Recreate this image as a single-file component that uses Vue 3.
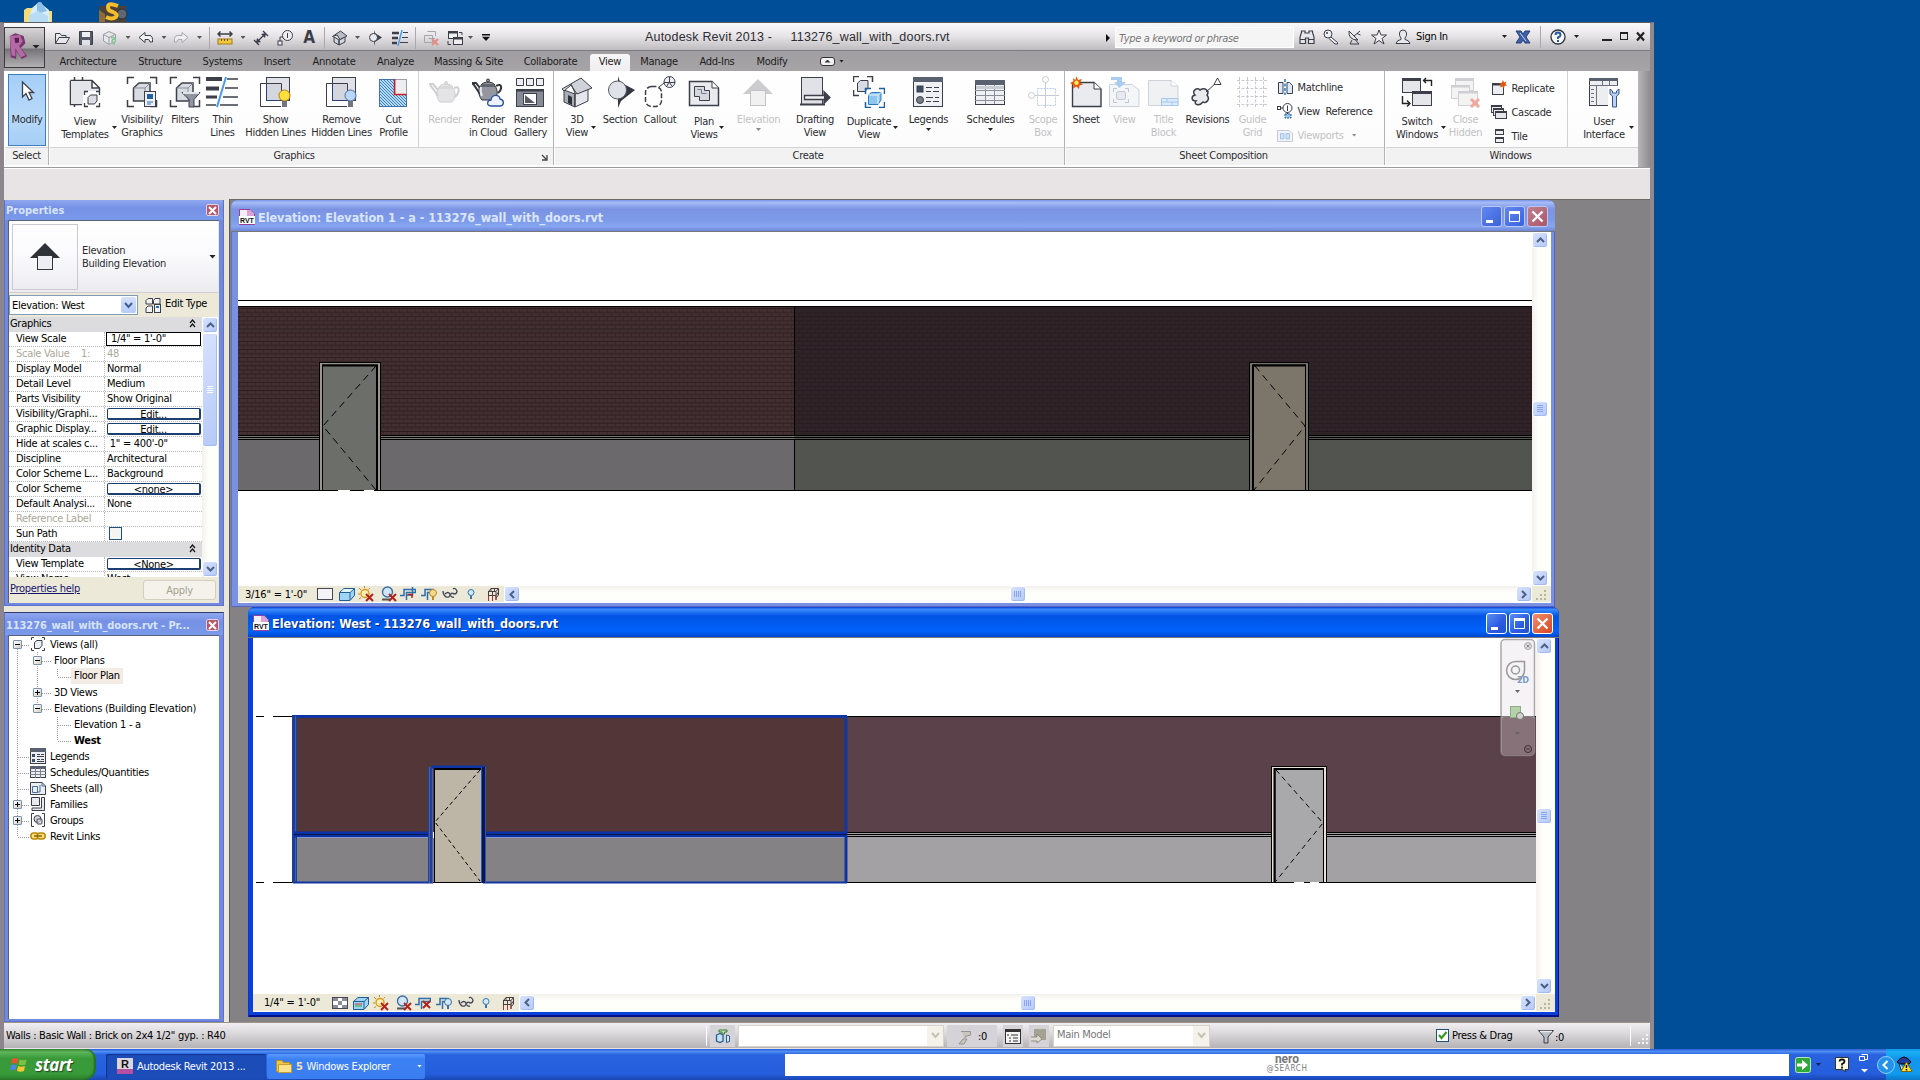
<script setup>
import { ref } from "vue";

// icon markup, 32x32 for the big ribbon buttons, 16x16 for everything else
const K = "#3c3f4a"
const G = "#d9dce2"
const corners = (c) => `<path d="M1.500 8V1.500H8M24 1.500H30.500V8M1.500 24V30.500H8M24 30.500H30.500V24" fill="none" stroke="${c}" stroke-width="1.500"/>`
const cube = `<path d="M7.500 12L13 7H24V19L19 25H7.500Z" fill="${G}" stroke="${K}" stroke-width="1.500"/><path d="M7.500 12H19V25M19 12L24 7" fill="none" stroke="#8b8f99"/>`

const big = {
  modify: `<path d="M11.500 7V22L15 18.500L18 25L21 23.500L18 17.500H22.500Z" fill="#fff" stroke="${K}" stroke-width="1.300"/>`,
  templates: `<path d="M1.500 4.500H23L30.500 12V15M1.500 4.500V28.500H13M5.500 1V5M13.500 1V5M5.500 28V31M23 4.500V12H30.500" fill="none" stroke="${K}" stroke-width="1.500"/><path d="M2 5H22V13H29V15H14V28H2Z" fill="#e3e5ea"/><path d="M15.500 19V15.500H19M27 15.500H30.500V19M15.500 27V30.500H19M27 30.500H30.500V27" fill="none" stroke="${K}" stroke-width="1.300"/><path d="M19 21.500L21.500 19H28V25L25.500 28H19Z" fill="${G}" stroke="${K}"/>`,
  visibility: corners(K) + cube + `<rect x="18.500" y="15.500" width="11" height="15" fill="#eef2f7" stroke="${K}"/><rect x="21" y="18" width="6" height="5" fill="#1d5fa8"/><path d="M21 26H27M21 28H25" stroke="#2b6cb8"/>`,
  filters: corners(K) + cube + `<path d="M13 16.500H31L25 23.500V31H20V23.500Z" fill="#8f95a0" stroke="${K}"/><path d="M14 17H30" stroke="#dfe3ea" stroke-width="2"/>`,
  thin: `<path d="M0 3H16" stroke="${K}" stroke-width="4"/><path d="M0 12.500H13" stroke="${K}" stroke-width="4"/><path d="M0 21H11" stroke="${K}" stroke-width="3"/><path d="M0 29H10M21 3H32M19 12H32M17 21H32M14 29H32" stroke="${K}" stroke-width="1.500"/><path d="M20 1L11 31" stroke="#4a9be8" stroke-width="2"/>`,
  showHidden: `<rect x="7.500" y="1.500" width="23" height="23" fill="#e0e2e7" stroke="${K}"/><path d="M7 7.500H1.500V30.500H22M1.500 7.500H22.500V15" fill="none" stroke="${K}"/><rect x="8" y="8" width="14" height="16" fill="#d3d6dd"/><path d="M7.500 8V24.500H20" fill="none" stroke="#1c3f9c" stroke-dasharray="2 1.500"/><circle cx="25.500" cy="19.500" r="5.500" fill="#ffdf3c" stroke="#b07a1a"/><rect x="23" y="25" width="5" height="6" fill="#70757f"/>`,
  removeHidden: `<rect x="7.500" y="1.500" width="23" height="23" fill="#e0e2e7" stroke="${K}"/><path d="M7 7.500H1.500V30.500H22M1.500 7.500H22.500V15" fill="none" stroke="${K}"/><rect x="8" y="8" width="14" height="16" fill="#d3d6dd"/><path d="M7.500 8V24.500H20" fill="none" stroke="#1c3f9c" stroke-dasharray="2 1.500"/><circle cx="25.500" cy="19.500" r="5.500" fill="#b9d7fb" stroke="#51699b"/><rect x="23" y="25" width="5" height="6" fill="#70757f"/>`,
  cut: `<defs><pattern id="ht" width="3" height="3" patternUnits="userSpaceOnUse"><rect width="3" height="3" fill="#b8dbf8"/><path d="M0 0L3 3" stroke="#3b7fc4"/></pattern></defs><rect x="2.500" y="3.500" width="27" height="27" fill="url(#ht)" stroke="#3f74b0"/><rect x="18" y="3.500" width="11.500" height="15" fill="#eceef2" stroke="#9a9ea8"/><path d="M17.500 3V18.500H29.500" fill="none" stroke="#c22" stroke-width="1.500"/>`,
  render: `<g fill="#e4e4e6" stroke="#cfcfd2"><path d="M9 12C6 18 9 24 11 26H23C27 22 27 16 24 12Z"/><path d="M9 20L2 10L1 8H4L9 14M25 12C31 9 31 16 26 21" fill="none" stroke-width="2"/><path d="M10 11C13 7 21 7 24 11Z"/><circle cx="17" cy="7" r="1.500"/></g>`,
  cloud: `<g fill="#94979f" stroke="#33353c"><path d="M8 10C5 16 8 22 10 24H22C26 20 26 14 23 10Z"/><path d="M8 18L2 9L0 7H4L8 12M24 10C31 6 30 14 26 17" fill="none" stroke-width="2"/><path d="M9 9C12 5 20 5 23 9Z"/><circle cx="16" cy="4.500" r="1.500"/></g><path d="M9 11C8 15 9 18 10 20" stroke="#e8e9ec" stroke-width="2" fill="none"/><path d="M19 30C14 30 15 24 19 24C20 18 27 18 28 23C33 24 32 30 28 30Z" fill="#eef3fd" stroke="#2a52a8" stroke-width="1.300"/>`,
  gallery: `<path d="M2.500 2.500H9.500V9.500H2.500ZM12.500 2.500H19.500V9.500H12.500ZM22.500 2.500H29.500V9.500H22.500Z" fill="#eceef1" stroke="${K}"/><rect x="2.500" y="13.500" width="27" height="17" fill="#878c96" stroke="${K}"/><path d="M2 14.500H30" stroke="${K}" stroke-width="2"/><rect x="9.500" y="17.500" width="13" height="11" fill="#fff" stroke="${K}"/><path d="M11 19V27H21Z" fill="#555a66"/>`,
  house: `<path d="M3 14L14 18V31L3 26Z" fill="#a9adb6" stroke="${K}"/><path d="M14 18L27 13V25L14 31Z" fill="#e4e6eb" stroke="${K}"/><path d="M1 13L20 2L31 12L16 18L10 9L3 15Z" fill="#cfd2d9" stroke="${K}"/><path d="M10 8L14 17L14 30" fill="none" stroke="${K}"/><path d="M7 19L11 21V29L7 27Z" fill="#30323a"/>`,
  section: `<path d="M14 0V32L17 25L31 14L16 6Z" fill="#33363f"/><circle cx="13.500" cy="14" r="9" fill="#dfe2e8" stroke="#555963"/>`,
  callout: `<rect x="1.500" y="10.500" width="16" height="20" rx="6" fill="none" stroke="${K}" stroke-dasharray="5 2" stroke-width="1.500"/><circle cx="25.500" cy="6" r="5.500" fill="#eceef2" stroke="${K}"/><path d="M15 11L20 7M20 6.500H31M25.500 1V6M23 10L25 6L28 10" fill="none" stroke="${K}"/>`,
  plan: `<path d="M1.500 5.500H24L30.500 12V29.500H1.500Z" fill="#e8eaee" stroke="${K}" stroke-width="1.500"/><path d="M24 5.500V12H30.500" fill="#fff" stroke="${K}"/><path d="M6.500 10.500H16.500V14.500H21.500V24.500H11.500V20.500H6.500Z" fill="#d5d8df" stroke="${K}"/><path d="M9.500 13.500H13.500V17.500H18.500" fill="none" stroke="#7a7e88"/>`,
  elevation: `<path d="M16 3L31 18H1Z" fill="#cdcdcf"/><rect x="8.500" y="14.500" width="15" height="15" fill="#f1f1f2" stroke="#c4c4c6"/>`,
  drafting: `<rect x="2.500" y="1.500" width="21" height="27" fill="#e0e2e7" stroke="${K}"/><path d="M1 28.500H26" stroke="${K}" stroke-width="2"/><path d="M5.500 19.500H25V15.500L31 21.500L25 27.500V23.500H5.500Z" fill="#f4f5f7" stroke="${K}" stroke-width="1.300"/><path d="M25 16L31 21.500L25 27Z" fill="${K}"/>`,
  duplicate: `<path d="M.5 6V.5H6M14 .5H19.500V6M.5 14V19.500H6" fill="none" stroke="${K}" stroke-width="1.500"/><path d="M4.500 7L7.500 4.500H15V12L12 15.500H4.500Z" fill="${G}" stroke="${K}"/><path d="M12.500 18V12.500H18M26 12.500H31.500V18M12.500 26V31.500H18M26 31.500H31.500V26" fill="none" stroke="#1e5fa0" stroke-width="1.500"/><path d="M15.500 19L18.500 16.500H28V24L25 28.500H15.500Z" fill="#8fc5ef" stroke="#2c7cc4"/><path d="M15.500 19H25V28M25 19L28 16.500" fill="none" stroke="#eaf5fd"/>`,
  legends: `<rect x="1.500" y="1.500" width="29" height="29" fill="#f0f1f4" stroke="${K}"/><rect x="1" y="1" width="30" height="5" fill="#596170"/><rect x="5" y="10" width="6" height="6" fill="#3f4c66" stroke="${K}"/><circle cx="8" cy="24" r="3.500" fill="#777c87" stroke="${K}"/><path d="M14 11.500H20M22 11.500H27M14 15.500H19M21 15.500H27M14 21.500H21M23 21.500H27M14 25.500H19M21 25.500H27" stroke="${K}"/>`,
  schedules: `<rect x="1.500" y="4.500" width="29" height="24" fill="#eef0f3" stroke="${K}"/><rect x="1" y="4" width="30" height="5" fill="#596170"/><path d="M1 14.500H31M1 19.500H31M1 24.500H31M11.500 9V28M20.500 9V28" stroke="#8a8e98"/><path d="M2 11.500H30" stroke="#c9ccd3" stroke-width="3"/>`,
  scope: `<rect x="10.500" y="12.500" width="18" height="17" fill="none" stroke="#b9cdea" stroke-dasharray="2 1"/><path d="M18.500 6V32M8 19.500H32" stroke="#c5cbd6"/><circle cx="18.500" cy="3.500" r="3" fill="#fff" stroke="#c6c9cf"/><circle cx="4.500" cy="19.500" r="3" fill="#fff" stroke="#c6c9cf"/>`,
  sheet: `<path d="M2.500 6.500H24L31 13V30.500H2.500Z" fill="#e9ebef" stroke="${K}" stroke-width="1.400"/><path d="M24 6.500V13H31" fill="#fff" stroke="${K}"/><path d="M6.500 0L8 4L12 3L10 6.500L13 8.500L9.500 9.500L9 13L6.500 10.500L3 12.500L3.500 9L0 7L3.500 5.500L3 2L5.500 4Z" fill="#e2570f"/><circle cx="6.500" cy="6.800" r="2.200" fill="#ffe95c"/>`,
  viewIn: `<path d="M1.500 8.500H24L31 14V30.500H1.500Z" fill="#f4f5f7" stroke="#ccd2dc"/><path d="M5.500 16V12.500H9M17 12.500H20.500V16M5.500 23V26.500H9M17 26.500H20.500V23" fill="none" stroke="#bcc6d6"/><rect x="8.500" y="15.500" width="9" height="8" rx="2" fill="#e7eaef" stroke="#c0c7d2"/><path d="M3 1H14V6H18L11.500 12L6 6H9V4H3Z" fill="#a9cdf2"/>`,
  titleBlock: `<path d="M1.500 4.500H24L31 10V29.500H1.500Z" fill="#f0f1f3" stroke="#cfd2d8"/><path d="M24 4.500V10H31" fill="#fff" stroke="#cfd2d8"/><path d="M14.500 22.500H31V29.500H14.500ZM14.500 26H31M20 22.500V26M25 26V29" fill="#dcebfa" stroke="#a7c8ec"/>`,
  revisions: `<path d="M4 19C0 15 6 11 9 14C14 11 19 15 16 19C20 24 14 28 12 26C8 31 2 28 5 25C0 25 0 20 4 19Z" fill="#e9ebee" stroke="${K}" stroke-width="1.500"/><path d="M15 16L24 8M23 8.500L26.500 2L30 8.500Z" fill="#fff" stroke="${K}"/>`,
  guide: `<path d="M3.500 1V31M11.500 1V31M19.500 1V31M27.500 1V31M1 4.500H31M1 12.500H31M1 20.500H31M1 28.500H31" stroke="#c9cbd0" stroke-dasharray="3 1.500"/>`,
  switchWin: `<rect x="1.500" y="2.500" width="18" height="14" fill="#e4e6ea" stroke="${K}"/><rect x="1" y="2" width="19" height="3" fill="${K}"/><rect x="11.500" y="15.500" width="19" height="14" fill="#e4e6ea" stroke="${K}"/><rect x="11" y="15" width="20" height="3" fill="${K}"/><path d="M23 4.500H30.500V10M25 2L22.500 4.500L25 7M1.500 20V27.500H8M6 24.500L9 27.500L6 30.500" fill="none" stroke="#222" stroke-width="1.400"/>`,
  closeHidden: `<rect x="6.500" y="2.500" width="18" height="12" fill="#f3f3f4" stroke="#d0d1d4"/><rect x="6" y="2" width="19" height="3" fill="#cfd0d3"/><rect x="2.500" y="9.500" width="18" height="13" fill="#f3f3f4" stroke="#d0d1d4"/><rect x="9.500" y="15.500" width="19" height="14" fill="#f3f3f4" stroke="#d0d1d4"/><path d="M2 10.500H21M9 16.500H29" stroke="#cfd0d3" stroke-width="2"/><path d="M22 23L30 31M30 23L22 31" stroke="#f0a79c" stroke-width="3"/>`,
  userUi: `<rect x="1.500" y="2.500" width="28" height="27" fill="#eceef1" stroke="${K}"/><rect x="1" y="2" width="29" height="3" fill="#596170"/><path d="M1 9.500H30M8.500 9V30M14.500 5V9M21.500 5V9M3 13.500H6M3 17.500H6M3 21.500H6M3 25.500H6" stroke="#6e727c"/><rect x="20" y="10" width="12" height="22" fill="#fff"/><path d="M22 13V18L24.500 20V31H28.500V20L31 18V13L28.500 15V17H24.500V15Z" fill="#bcd3f3" stroke="#34558f"/>`,
}

const small = {
  open: `<path d="M1.500 13.500V3.500H6L7.500 5.500H12V7.500M1.500 13.500L5 7.500H15.500L12 13.500Z" fill="#e6e7ea" stroke="${K}"/>`,
  save: `<path d="M1.500 1.500H14.500V14.500H1.500Z" fill="#565a66" stroke="${K}"/><rect x="4" y="2" width="8" height="5" fill="#eceef1"/><rect x="4" y="10" width="8" height="5" fill="#dfe1e6"/>`,
  sync: `<path d="M1.500 4.500L7 1.500L13.500 4.500V11L7 14.500L1.500 11ZM1.500 4.500L7 7.500L13 4.500M7 7.500V14" fill="#e6e7e9" stroke="#9a9da5"/><path d="M9 8C13 6 15 10 12 13M13 9C9 9 9 14 13 14" fill="none" stroke="#8cc39b" stroke-width="1.500"/>`,
  undo: `<path d="M1 7.500L7 2.500V5.500H12Q15 6 14.500 12H12Q12 9.500 10 9.500H7V12.500Z" fill="#f2f3f5" stroke="${K}"/>`,
  redo: `<path d="M15 7.500L9 2.500V5.500H4Q1 6 1.500 12H4Q4 9.500 6 9.500H9V12.500Z" fill="#eee" stroke="#a5a7ad"/>`,
  measure: `<path d="M1 4H15M3.500 1.500L1 4L3.500 6.500M12.500 1.500L15 4L12.500 6.500" fill="none" stroke="${K}" stroke-width="1.500"/><rect x="1" y="9" width="14" height="5" fill="#f3c93c" stroke="#a07a17"/><path d="M4.500 9V11M7.500 9V11M10.500 9V11" stroke="#6d5310"/>`,
  dim: `<path d="M3 13L13 3M1 10L6 15M10 1L15 6" stroke="${K}" stroke-width="1.300"/><path d="M3 13L4 8L8 12ZM13 3L12 8L8 4Z" fill="${K}"/>`,
  tag: `<circle cx="10.500" cy="5.500" r="5" fill="#eee" stroke="${K}"/><path d="M10.500 3V8M6 7H3V11" fill="none" stroke="${K}"/><rect x="1" y="11" width="4" height="4" fill="#eee" stroke="${K}"/>`,
  home: `<path d="M2 7L7 10V15L2 12ZM7 10L13 7V12L7 15Z" fill="#d4d7dd" stroke="${K}"/><path d="M.5 6.500L8.500 1L15 6L8 9.500L5 5Z" fill="#b8bcc6" stroke="${K}"/>`,
  sect: `<path d="M7 0V16L8 12L15 7.500L8 3Z" fill="${K}"/><circle cx="6.500" cy="7.500" r="4" fill="#e8e9ec" stroke="${K}"/>`,
  thinS: `<path d="M0 3H7M0 8H6M0 13H5" stroke="${K}" stroke-width="2.600"/><path d="M11 2.500H16M10 7.500H16M8 12.500H16" stroke="${K}"/><path d="M10 0L6 16" stroke="#4a9be8" stroke-width="1.500"/>`,
  closeH: `<path d="M4.500 1.500H12.500V6M1.500 5.500H9.500V12.500H1.500ZM5.500 8.500H12" fill="none" stroke="#a3a5aa"/><path d="M9 9L15 15M15 9L9 15" stroke="#e08a84" stroke-width="2"/>`,
  switchS: `<rect x="1.500" y="1.500" width="9" height="7" fill="#eee" stroke="${K}"/><rect x="6.500" y="7.500" width="9" height="7" fill="#eee" stroke="${K}"/><path d="M1 2.500H11M6 8.500H16" stroke="${K}" stroke-width="2"/><path d="M12 2.500H15V5M1 11V14.500H4" fill="none" stroke="${K}"/>`,
  binoc: `<path d="M2.500 3.500V2H6V4H10V2H13.500V3.500L15 8V14.500H9.500V9H6.500V14.500H1V8Z" fill="#e6e7ea" stroke="${K}" stroke-width="1.200"/><path d="M1 10.500H6.500M9.500 10.500H15" stroke="${K}"/>`,
  key: `<path d="M8 8L14.500 13.500V15H12L6 9.500" fill="#f0f0f2" stroke="${K}"/><circle cx="5" cy="5" r="4" fill="#f0f0f2" stroke="${K}"/><circle cx="4" cy="4" r="1" fill="${K}"/>`,
  dish: `<path d="M2 2Q1 11 11 11Z" fill="#e6e7ea" stroke="${K}"/><path d="M7 7L13 2M10 4.500L13.500 6M5 11L3 15H12L8.500 11" fill="none" stroke="${K}"/>`,
  star: `<path d="M8 1L10 6H15.500L11 9.500L13 15L8 11.500L3 15L5 9.500L.5 6H6Z" fill="#f0f0f2" stroke="${K}"/>`,
  user: `<path d="M1 14.500H15Q14 11 10 10.500V9Q12 7 11.500 4Q11 1 8 1Q5 1 4.500 4Q4 7 6 9V10.500Q2 11 1 14.500Z" fill="#e9eaed" stroke="${K}"/>`,
  exch: `<path d="M1 2H6L8 5L10 2H15L11 8L15 14H10L8 11L6 14H1L5 8Z" fill="#3d5fa8" stroke="#27407c"/><path d="M5 4L11 12" stroke="#c7d5f2"/>`,
  help: `<circle cx="8" cy="8" r="7" fill="#f6f7f9" stroke="#30343f" stroke-width="1.300"/><path d="M5.500 6Q5.500 3.500 8 3.500T10.500 6Q10.500 7.500 8 8.500V10" fill="none" stroke="#2557a8" stroke-width="1.900"/><rect x="7" y="11" width="2" height="2" fill="#2557a8"/>`,
  matchline: `<path d="M1.500 3.500H6V14.500H1.500ZM10 3.500H12.500L15.500 6.500V14.500H10Z" fill="#dcebfa" stroke="${K}"/><path d="M8 0V16" stroke="#2a7ac8" stroke-dasharray="3 1.500" stroke-width="1.500"/>`,
  viewRef: `<circle cx="10.500" cy="5" r="4.500" fill="#fff" stroke="${K}"/><path d="M10.500 2.500V8M4 5H6M10.500 9V11" stroke="${K}"/><rect x=".5" y="3.500" width="3" height="3" fill="#fff" stroke="${K}"/><rect x="8" y="11" width="6" height="4" fill="#9cc6ee" stroke="#1e5fa0" stroke-dasharray="2 1"/>`,
  viewports: `<path d="M.5 3.500H12L15.500 6.500V14.500H.5Z" fill="#f2f4f7" stroke="#c5cbd5"/><path d="M3.500 6.500H7V12H3.500ZM9 6.500H12.500V12H9Z" fill="#cfe2f6" stroke="#a5c6ea"/>`,
  replicate: `<rect x="1.500" y="3.500" width="11" height="11" fill="#eceef1" stroke="${K}"/><path d="M1 4.500H11" stroke="${K}" stroke-width="2"/><path d="M12 0L13 2.500L15.500 1.500L14.500 4L16 5.500L13.500 6L13 8.500L11.500 6.500L9 7.500L10 5L8 3.500L10.500 3Z" fill="#e2570f"/>`,
  cascade: `<rect x=".5" y="1.500" width="10" height="7" fill="#eee" stroke="${K}"/><rect x="2.500" y="4.500" width="10" height="7" fill="#eee" stroke="${K}"/><rect x="4.500" y="7.500" width="11" height="7" fill="#e4e6ea" stroke="${K}"/><path d="M0 2.500H11M2 5.500H13M4 8.500H16" stroke="${K}"/>`,
  tile: `<rect x="4.500" y="1.500" width="8" height="5" fill="#eee" stroke="${K}"/><rect x="4.500" y="9.500" width="8" height="5" fill="#eee" stroke="${K}"/><path d="M4 2.500H13M4 10.500H13" stroke="${K}"/>`,
  rect: `<rect x=".5" y="2.500" width="15" height="11" fill="#f4f4f8" stroke="#444856"/>`,
  detail: `<rect x=".5" y="2.500" width="15" height="11" fill="#fff" stroke="#444856"/><path d="M1 3H6V6H1ZM10 3H15V6H10ZM6 6H10V10H6ZM1 10H6V13H1ZM10 10H15V13H10Z" fill="#8a8e99"/>`,
  box: `<path d="M.5 6.500L5 2.500H15.500V9.500L11 14.500H.5Z" fill="#9fd4f6" stroke="#1f5f95"/><path d="M.5 6.500H11V14M11 6.500L15.500 2.500" fill="none" stroke="#1f5f95"/><path d="M2 6L5 3H14L11 6Z" fill="#e4f4fd"/>`,
  boxR: `<path d="M.5 6.500L5 2.500H15.500V9.500L11 14.500H.5Z" fill="#9fd4f6" stroke="#1f5f95"/><path d="M.5 6.500H11V14M11 6.500L15.500 2.500" fill="none" stroke="#1f5f95"/><path d="M2 9H9" stroke="#c33" /><path d="M2 11H9" stroke="#3a3"/>`,
  sun: `<path d="M6.500 0V2M1 2L3 4M0 8H2M1 13L3 11.500M12 2L10.500 3.500" stroke="#c98a12"/><circle cx="7" cy="7.500" r="4" fill="#fdf0b4" stroke="#d79a1a" stroke-width="1.400"/><path d="M8 8L15 15M15 8L8 15" stroke="#b5211c" stroke-width="2"/>`,
  shadow: `<circle cx="6.500" cy="6" r="5" fill="#cfe6f8" stroke="#3d6fa5" stroke-width="1.400"/><path d="M1 13.500H9" stroke="#555" stroke-width="2"/><path d="M8 8L15 15M15 8L8 15" stroke="#b5211c" stroke-width="2"/>`,
  crop: `<path d="M0 9.500H4V3.500H15.500V6.500H6.500V14M12.500 1V9H6" fill="none" stroke="#2c6fae" stroke-width="1.500"/><path d="M8 8.500H12V12" fill="none" stroke="#b5211c" stroke-width="1.500"/>`,
  cropX: `<path d="M0 9.500H4V3.500H15.500V6.500H6.500V14" fill="none" stroke="#2c6fae" stroke-width="1.500"/><path d="M8 6L15 13M15 6L8 13" stroke="#b5211c" stroke-width="2"/>`,
  cropBulb: `<path d="M0 9.500H4V3.500H13M6.500 14V6.500H10" fill="none" stroke="#2c6fae" stroke-width="1.500"/><circle cx="12" cy="7" r="3.500" fill="#f9d98c" stroke="#b98a2a"/><path d="M12 10V14" stroke="#b98a2a" stroke-width="2"/>`,
  cropB2: `<path d="M0 9.500H4V3.500H13M6.500 14V6.500H10" fill="none" stroke="#2c6fae" stroke-width="1.500"/><circle cx="12" cy="7" r="3.500" fill="#d5e8f9" stroke="#3d6fa5"/><path d="M12 10V14" stroke="#3d6fa5" stroke-width="2"/>`,
  glasses: `<path d="M1 5Q1 9 4 11Q8 12 8 8Q6 5 3 8M8 9Q10 6 12 8Q15 8 15 5Q13 1 11 3M8 9Q10 12 12 11" fill="none" stroke="#444856" stroke-width="1.300"/>`,
  bulb: `<circle cx="8" cy="6.500" r="3" fill="#d5e8f9" stroke="#3476b4"/><path d="M8 10V13" stroke="#3476b4" stroke-width="2"/>`,
  frame: `<path d="M3.500 5.500L6 2.500H13.500V9L11 12M3.500 5.500V14.500M7.500 5.500V14M11 5.500V14M3 5.500H11L13.500 2.500M3 9.500H11L13.500 6M6 2.500V5.500M9.500 2.500V5.500" fill="none" stroke="#4a3d42"/><path d="M3.500 10V15M7.500 10V15M11 10V14" stroke="#a33"/>`,
  views: `<path d="M4 1.500H1.500V4M12 1.500H14.500V4M4 14.500H1.500V12M12 14.500H14.500V12" fill="none" stroke="${K}"/><path d="M4.500 6.500L7 4.500H12V9.500L9.500 12.500H4.500Z" fill="#eceef2" stroke="${K}"/>`,
  leg: `<rect x=".5" y=".5" width="15" height="15" fill="#eceef1" stroke="${K}"/><rect x="0" y="0" width="16" height="4" fill="#596170"/><path d="M2 6H5V9H2ZM2 11H5V14H2Z" fill="#3f4c66"/><path d="M7 6.500H10M11 6.500H14M7 8.500H14M7 11.500H10M11 11.500H14M7 13.500H14" stroke="${K}"/>`,
  sch: `<rect x=".5" y="2.500" width="15" height="11" fill="#eef0f3" stroke="${K}"/><path d="M0 3.500H16" stroke="#596170" stroke-width="3"/><path d="M0 7.500H16M0 10.500H16M5.500 4V14M10.500 4V14" stroke="#7e828c"/>`,
  sht: `<path d="M.5 2.500H12L15.500 6V14.500H.5Z" fill="#eceef1" stroke="${K}"/><path d="M2.500 6.500H7.500V12.500H2.500ZM10 5V12H7M12 2V6H15" fill="none" stroke="#4a6e9c"/>`,
  fam: `<path d="M1.500 1.500H9.500V9.500H1.500ZM11.500 1.500H14.500V14.500H2V12H11.500Z" fill="#e7e9ed" stroke="${K}"/>`,
  grp: `<path d="M4 1.500H1.500V14.500H4M12 1.500H14.500V14.500H12" fill="none" stroke="${K}"/><circle cx="7.500" cy="7" r="3.500" fill="#d3d8e0" stroke="${K}"/><rect x="7" y="7" width="5" height="5" rx="1" fill="#e3e6eb" fill-opacity=".6" stroke="${K}"/>`,
  link: `<rect x=".8" y="5" width="8" height="6" rx="3" fill="#ffe27a" stroke="#b9860e" stroke-width="1.500"/><rect x="7.200" y="5" width="8" height="6" rx="3" fill="#ffe27a" stroke="#b9860e" stroke-width="1.500"/><path d="M4 8H12" stroke="#7d5a08" stroke-width="1.400"/>`,
  editType: `<path d="M3 1.500H7.500V7H1V3.500ZM10 1.500H15V7H8.500V3.500ZM3 9H7.500V15.500H1V11Z" fill="#f2f2f2" stroke="${K}"/><rect x="9.500" y="7.500" width="6" height="8" fill="#eef2f7" stroke="${K}"/><rect x="11" y="9" width="3" height="2" fill="#2b6cb8"/>`,
  workset: `<path d="M1.500 7L5 5.500L8 7V13L5 14.500L1.500 13Z" fill="#c4e2f7" stroke="#2a5f93" stroke-width="1.300"/><path d="M4 4V2H12V4H9.500V6H7V4Z" fill="#bfe3ae" stroke="#3d7a3a"/><path d="M11.500 7L14.500 8V13.500L11.500 14.500Z" fill="#dce6ee" stroke="#2a5f93"/>`,
  paint: `<path d="M4 2.500H13.500V6L8 7.500V9M6 10H10L7 15H2Z" fill="#c9c5bd" stroke="#96938c"/>`,
  list: `<rect x=".5" y="1.500" width="15" height="14" fill="#f4f4f4" stroke="#333"/><path d="M0 3H16" stroke="#333" stroke-width="2"/><path d="M2 7H4M6 7H13M4 10H6M8 10H13M4 13H6M8 13H13" stroke="#333"/>`,
  main: `<rect x="3" y="1" width="12" height="11" fill="#a5a294"/><path d="M0 9H6V6L11 11L6 15V13H0" fill="#dedbd2" stroke="#8e8b80"/>`,
  funnel: `<path d="M.5 2.500H15.500L10 9V15H6V9Z" fill="#b9bdc6" stroke="${K}"/><path d="M2 3.500H14" stroke="#eee" stroke-width="1.500"/>`,
}

// turns label centres into gaps so that each panel stays a plain flex row
const lay = (start, items) => {
  let edge = start
  return items.map((it) => {
    const left = it.c - it.w / 2
    const gap = left - edge
    edge = left + it.w
    return { ...it, gap }
  })
}

const graphics = lay(49, [
  { c: 85, w: 42, icon: "templates", l: ["View", "Templates"], side: 30 },
  { c: 142, w: 42, icon: "visibility", l: ["Visibility/", "Graphics"] },
  { c: 185, w: 32, icon: "filters", l: ["Filters"] },
  { c: 222.500, w: 32, icon: "thin", l: ["Thin", "Lines"] },
  { c: 275.5, w: 60, icon: "showHidden", l: ["Show", "Hidden Lines"] },
  { c: 341.500, w: 60, icon: "removeHidden", l: ["Remove", "Hidden Lines"] },
  { c: 393.5, w: 32, icon: "cut", l: ["Cut", "Profile"] },
  { c: 418.5, w: 1, line: true },
  { c: 445, w: 34, icon: "render", l: ["Render"], off: true },
  { c: 488, w: 38, icon: "cloud", l: ["Render", "in Cloud"] },
  { c: 530.5, w: 34, icon: "gallery", l: ["Render", "Gallery"] },
])
const create = lay(554, [
  { c: 577, w: 32, icon: "house", l: ["3D", "View"], side: 17, up: true },
  { c: 620, w: 34, icon: "section", l: ["Section"] },
  { c: 660, w: 34, icon: "callout", l: ["Callout"] },
  { c: 704, w: 32, icon: "plan", l: ["Plan", "Views"], side: 18 },
  { c: 758.5, w: 42, icon: "elevation", l: ["Elevation"], off: true, below: true },
  { c: 815, w: 40, icon: "drafting", l: ["Drafting", "View"] },
  { c: 869, w: 46, icon: "duplicate", l: ["Duplicate", "View"], side: 27 },
  { c: 928.5, w: 40, icon: "legends", l: ["Legends"], below: true },
  { c: 990.5, w: 50, icon: "schedules", l: ["Schedules"], below: true },
  { c: 1043, w: 32, icon: "scope", l: ["Scope", "Box"], off: true },
])
const sheets = lay(1065, [
  { c: 1086, w: 30, icon: "sheet", l: ["Sheet"] },
  { c: 1124.5, w: 30, icon: "viewIn", l: ["View"], off: true },
  { c: 1163.5, w: 30, icon: "titleBlock", l: ["Title", "Block"], off: true },
  { c: 1207.5, w: 46, icon: "revisions", l: ["Revisions"] },
  { c: 1252.5, w: 30, icon: "guide", l: ["Guide", "Grid"], off: true },
])
const sheetSmall = [
  { icon: "matchline", l: "Matchline" },
  { icon: "viewRef", l: "View  Reference" },
  { icon: "viewports", l: "Viewports", off: true, arrow: true },
]
const windowsA = lay(1385, [
  { c: 1417, w: 44, icon: "switchWin", l: ["Switch", "Windows"], side: 27 },
  { c: 1465.5, w: 34, icon: "closeHidden", l: ["Close", "Hidden"], off: true },
])
const windowsSmall = [
  { icon: "replicate", l: "Replicate" },
  { icon: "cascade", l: "Cascade" },
  { icon: "tile", l: "Tile" },
]
const ui = lay(1567, [{ c: 1603.5, w: 46, icon: "userUi", l: ["User", "Interface"], side: 28 }])

const panels = [
  { title: "Graphics", cls: "p-graphics", items: graphics, launcher: true },
  { title: "Create", cls: "p-create", items: create },
  { title: "Sheet Composition", cls: "p-sheets", items: sheets, small: sheetSmall },
  { title: "Windows", cls: "p-windows", items: windowsA, small: windowsSmall, after: ui },
]

const tabs = lay(4, [
  { c: 88, w: 62, t: "Architecture" },
  { c: 160, w: 48, t: "Structure" },
  { c: 222.500, w: 44, t: "Systems" },
  { c: 277, w: 32, t: "Insert" },
  { c: 334, w: 48, t: "Annotate" },
  { c: 395.500, w: 40, t: "Analyze" },
  { c: 468.500, w: 72, t: "Massing & Site" },
  { c: 550.500, w: 58, t: "Collaborate" },
  { c: 610, w: 40, t: "View", on: true },
  { c: 659, w: 40, t: "Manage" },
  { c: 717, w: 40, t: "Add-Ins" },
  { c: 772, w: 34, t: "Modify" },
])

const quick = lay(45, [
  { c: 62, w: 16, i: "open" }, { c: 86, w: 16, i: "save" }, { c: 110, w: 16, i: "sync" }, { c: 128, w: 5, a: 1 },
  { c: 146, w: 16, i: "undo" }, { c: 164, w: 5, a: 1 }, { c: 181, w: 16, i: "redo" }, { c: 199.500, w: 5, a: 1 },
  { c: 209.500, w: 1, s: 1 }, { c: 225, w: 16, i: "measure" }, { c: 243, w: 5, a: 1 }, { c: 261, w: 16, i: "dim" },
  { c: 285, w: 16, i: "tag" }, { c: 309, w: 16, t: "A" }, { c: 324.500, w: 1, s: 1 }, { c: 340, w: 16, i: "home" },
  { c: 357.500, w: 5, a: 1 }, { c: 375, w: 16, i: "sect" }, { c: 400, w: 16, i: "thinS" }, { c: 415.500, w: 1, s: 1 },
  { c: 431, w: 16, i: "closeH" }, { c: 455, w: 16, i: "switchS" }, { c: 470.500, w: 5, a: 1 }, { c: 485.500, w: 7, a: 2 },
])

const search = ["binoc", "key", "dish", "star", "user"]

const rows = ref([
  { head: "Graphics" },
  { n: "View Scale", v: "1/4\" = 1'-0\"", edit: true },
  { n: "Scale Value    1:", v: "48", off: true },
  { n: "Display Model", v: "Normal" },
  { n: "Detail Level", v: "Medium" },
  { n: "Parts Visibility", v: "Show Original" },
  { n: "Visibility/Graphi...", b: "Edit..." },
  { n: "Graphic Display...", b: "Edit..." },
  { n: "Hide at scales c...", v: " 1\" = 400'-0\"" },
  { n: "Discipline", v: "Architectural" },
  { n: "Color Scheme L...", v: "Background" },
  { n: "Color Scheme", b: "<none>" },
  { n: "Default Analysi...", v: "None" },
  { n: "Reference Label", v: "", off: true },
  { n: "Sun Path", check: true },
  { head: "Identity Data" },
  { n: "View Template", b: "<None>" },
  { n: "View Name", v: "West" },
])

const tree = [
  { t: "Views (all)", lv: 0, x: "-", i: "views" },
  { t: "Floor Plans", lv: 1, x: "-" },
  { t: "Floor Plan", lv: 2, hot: true },
  { t: "3D Views", lv: 1, x: "+" },
  { t: "Elevations (Building Elevation)", lv: 1, x: "-" },
  { t: "Elevation 1 - a", lv: 2 },
  { t: "West", lv: 2, bold: true },
  { t: "Legends", lv: 0, i: "leg" },
  { t: "Schedules/Quantities", lv: 0, i: "sch" },
  { t: "Sheets (all)", lv: 0, i: "sht" },
  { t: "Families", lv: 0, x: "+", i: "fam" },
  { t: "Groups", lv: 0, x: "+", i: "grp" },
  { t: "Revit Links", lv: 0, i: "link" },
]

const views = [
  { id: "one", title: "Elevation: Elevation 1 - a - 113276_wall_with_doors.rvt", scale: "3/16\" = 1'-0\"",
    tools: lay(307, [
      { c: 325, w: 16, i: "rect" }, { c: 346.500, w: 16, i: "box" }, { c: 366, w: 16, i: "sun" }, { c: 388.500, w: 16, i: "shadow" },
      { c: 408, w: 16, i: "crop" }, { c: 429, w: 16, i: "cropBulb" }, { c: 450, w: 16, i: "glasses" }, { c: 471, w: 16, i: "bulb" }, { c: 493, w: 16, i: "frame" },
    ]) },
  { id: "two", title: "Elevation: West - 113276_wall_with_doors.rvt", scale: "1/4\" = 1'-0\"",
    tools: lay(319, [
      { c: 340, w: 16, i: "detail" }, { c: 361, w: 16, i: "boxR" }, { c: 381, w: 16, i: "sun" }, { c: 403.500, w: 16, i: "shadow" },
      { c: 423, w: 16, i: "cropX" }, { c: 444, w: 16, i: "cropB2" }, { c: 465.500, w: 16, i: "glasses" }, { c: 486, w: 16, i: "bulb" }, { c: 508, w: 16, i: "frame" },
    ]) },
]
</script>

<template>
  <div class="desktop">
    <div class="shortcuts">
      <svg class="sc1" width="28" height="20" viewBox="0 0 28 20"><path d="M0 20V8L3 6H9L11 9H28V20Z" fill="#f4dc7a" /><path d="M8 6L15 0L25 8L26 20H4Z" fill="#d9edf9" /><path d="M13 1L17 0L23 9L13 12Z" fill="#8cc0ea" /><path d="M5 13L14 9L24 14V20H5Z" fill="#b8dcf4" /></svg>
      <svg width="30" height="20" viewBox="0 0 30 20"><path d="M1 4H28V20H1Z" fill="#4a4238" /><circle cx="24" cy="12" r="5" fill="#5f6774" stroke="#2c2e33" /><path d="M20 4Q10 0 10 5Q10 9 15 10Q20 12 18 15Q14 18 8 15" fill="none" stroke="#f5bc2b" stroke-width="4" /><path d="M1 8L7 12V20H1Z" fill="#8b6c3a" /></svg>
    </div>

    <div class="app">
      <div class="rbtn">
        <svg width="24" height="30" viewBox="0 0 26 32"><path d="M3 4L9 1L18 4L20 12L15 17L22 26L16 29L10 20L10 29L4 27Z" fill="#7d3470" /><path d="M3 4L14 3L17 10L13 15L20 25L15 27L9 17V26L5 25Z" fill="#b56aa8" /><path d="M8 6L13 6V11L9 12Z" fill="#5c2050" /></svg>
        <i class="dn"></i>
      </div>

      <div class="titlebar">
        <div class="quick">
          <template v-for="(q, n) in quick" :key="n">
            <svg v-if="q.i" width="16" height="16" viewBox="0 0 16 16" :style="{ marginLeft: q.gap + 'px' }" v-html="small[q.i]"></svg>
            <b v-else-if="q.t" class="qa" :style="{ marginLeft: q.gap + 'px' }">{{ q.t }}</b>
            <i v-else-if="q.a" :class="q.a === 2 ? 'custom' : 'dn'" :style="{ marginLeft: q.gap + 'px' }"></i>
            <i v-else class="qsep" :style="{ marginLeft: q.gap + 'px' }"></i>
          </template>
        </div>
        <span class="apptitle">Autodesk Revit 2013 -&nbsp;&nbsp;&nbsp;&nbsp; 113276_wall_with_doors.rvt</span>
        <i class="rt"></i>
        <span class="searchbox">Type a keyword or phrase</span>
        <svg v-for="s in search" :key="s" class="sicon" width="16" height="16" viewBox="0 0 16 16" v-html="small[s]"></svg>
        <span class="signin">Sign In</span>
        <i class="dn d1"></i>
        <svg class="exch" width="16" height="16" viewBox="0 0 16 16" v-html="small.exch"></svg>
        <i class="qsep"></i>
        <svg class="helpi" width="16" height="16" viewBox="0 0 16 16" v-html="small.help"></svg>
        <i class="dn"></i>
        <svg class="winctl" width="44" height="12" viewBox="0 0 44 12"><path d="M0 9H10" stroke="#222" stroke-width="2" /><rect x="18.500" y="1.500" width="7" height="7" fill="none" stroke="#222" /><path d="M18 2H26" stroke="#222" stroke-width="2" /><path d="M35 1.500L42 9.500M42 1.500L35 9.500" stroke="#222" stroke-width="2.200" /></svg>
      </div>

      <div class="tabs">
        <span v-for="t in tabs" :key="t.t" :class="['tab', { on: t.on }]" :style="{ width: t.w + 'px', marginLeft: t.gap + 'px' }">{{ t.t }}</span>
        <span class="pill"><i></i></span>
        <i class="dn"></i>
      </div>

      <div class="ribbon">
        <div class="panel p-select">
          <div class="pbody">
            <div class="modify">
              <svg width="32" height="32" viewBox="0 0 32 32" v-html="big.modify"></svg>
              <span>Modify</span>
            </div>
          </div>
          <div class="ptitle">Select</div>
        </div>
        <div v-for="p in panels" :key="p.title" :class="['panel', p.cls]">
          <div class="pbody">
            <template v-for="(b, n) in p.items" :key="n">
              <i v-if="b.line" class="pline" :style="{ marginLeft: b.gap + 'px' }"></i>
              <div v-else :class="['btn', { off: b.off, low: b.side && !b.up }]" :style="{ width: b.w + 'px', marginLeft: b.gap + 'px' }">
                <svg width="32" height="32" viewBox="0 0 32 32" v-html="big[b.icon]"></svg>
                <span v-for="l in b.l" :key="l">{{ l }}</span>
                <i v-if="b.side" class="dn side" :style="{ left: b.w / 2 + b.side - 3 + 'px' }"></i>
                <i v-if="b.below" class="dn below"></i>
              </div>
            </template>
            <div v-if="p.small" class="smalls">
              <div v-for="s in p.small" :key="s.l" :class="['sm', { off: s.off }]">
                <svg width="16" height="16" viewBox="0 0 16 16" v-html="small[s.icon]"></svg>
                <span>{{ s.l }}</span>
                <i v-if="s.arrow" class="dn"></i>
              </div>
            </div>
            <template v-if="p.after">
              <i class="pline"></i>
              <div v-for="b in p.after" :key="b.icon" class="btn low" :style="{ width: b.w + 'px', marginLeft: b.gap + 'px' }">
                <svg width="32" height="32" viewBox="0 0 32 32" v-html="big[b.icon]"></svg>
                <span v-for="l in b.l" :key="l">{{ l }}</span>
                <i class="dn side" :style="{ left: b.w / 2 + b.side - 3 + 'px' }"></i>
              </div>
            </template>
          </div>
          <div class="ptitle">{{ p.title }}
            <svg v-if="p.launcher" class="launch" width="7" height="7" viewBox="0 0 7 7"><path d="M1 1L5 5M6 1V6H1" fill="none" stroke="#444" stroke-width="1.300" /></svg>
          </div>
        </div>
      </div>
      <div class="options"></div>

      <div class="main">
        <div class="docks">
          <div class="dock props">
            <div class="docktitle"><b>Properties</b><i class="x"><svg width="9" height="9" viewBox="0 0 9 9"><path d="M1 1L8 8M8 1L1 8" stroke="#fff" stroke-width="2" /></svg></i></div>
            <div class="inner">
              <div class="typesel">
                <div class="thumb"><svg width="30" height="28" viewBox="0 0 30 28"><path d="M15 0L30 15H0Z" fill="#2f3138" /><rect x="7.500" y="12.500" width="15" height="14" fill="#eceef4" stroke="#33353c" /></svg></div>
                <div class="tname">Elevation<br>Building Elevation</div>
                <i class="dn"></i>
              </div>
              <div class="inst">
                <div class="combo"><span>Elevation: West</span><i class="cbtn"><svg width="9" height="7" viewBox="0 0 9 7"><path d="M1 1L4.500 5L8 1" fill="none" stroke="#3f5f95" stroke-width="2" /></svg></i></div>
                <svg width="16" height="16" viewBox="0 0 16 16" v-html="small.editType"></svg>
                <span class="et">Edit Type</span>
              </div>
              <div class="gridwrap">
                <div class="grid">
                  <div v-for="(r, n) in rows" :key="n" :class="['row', { head: r.head, off: r.off }]">
                    <template v-if="r.head">
                      <span>{{ r.head }}</span>
                      <svg width="7" height="9" viewBox="0 0 7 9"><path d="M1 4L3.500 1L6 4M1 8L3.500 5L6 8" fill="none" stroke="#111" stroke-width="1.200" /></svg>
                    </template>
                    <template v-else>
                      <span class="name">{{ r.n }}</span>
                      <span v-if="r.b" class="val"><span class="ebtn">{{ r.b }}</span></span>
                      <span v-else-if="r.check" class="val"><i class="chk"></i></span>
                      <span v-else :class="['val', { edit: r.edit }]">{{ r.v }}</span>
                    </template>
                  </div>
                </div>
                <div class="vs">
                  <i class="sb"><svg width="9" height="6" viewBox="0 0 9 6"><path d="M1 5L4.500 1.500L8 5" fill="none" stroke="#4d6185" stroke-width="2" /></svg></i>
                  <i class="sb long"><svg width="6" height="8" viewBox="0 0 6 8"><path d="M0 .5H6M0 2.500H6M0 4.500H6M0 6.500H6" stroke="#fff" /></svg></i>
                  <i class="sb end"><svg width="9" height="6" viewBox="0 0 9 6"><path d="M1 1L4.500 4.500L8 1" fill="none" stroke="#4d6185" stroke-width="2" /></svg></i>
                </div>
              </div>
              <div class="pfoot"><u>Properties help</u><span class="apply">Apply</span></div>
            </div>
          </div>

          <div class="dock browser">
            <div class="docktitle"><b>113276_wall_with_doors.rvt - Pr...</b><i class="x"><svg width="9" height="9" viewBox="0 0 9 9"><path d="M1 1L8 8M8 1L1 8" stroke="#fff" stroke-width="2" /></svg></i></div>
            <div class="inner">
              <svg class="tlines" width="80" height="210" viewBox="0 0 80 210">
                <path d="M8.500 9V201M28.500 16V73M48.500 33V41M48.500 81V105M9 9.500H20M9 121.500H20M9 137.500H20M9 153.500H20M9 169.500H20M9 185.500H20M9 201.500H20M29 25.500H43M29 57.500H43M29 73.500H43M49 41.500H63M49 89.500H63M49 105.500H63" fill="none" stroke="#999" stroke-dasharray="1 1" />
              </svg>
              <div v-for="t in tree" :key="t.t" :class="['node', 'lv' + t.lv, { bold: t.bold }]">
                <i class="exp" :class="{ show: t.x }"><svg v-if="t.x" width="5" height="5" viewBox="0 0 5 5"><path :d="t.x === '+' ? 'M0 2.5H5M2.5 0V5' : 'M0 2.5H5'" stroke="#000" /></svg></i>
                <svg v-if="t.i" width="16" height="16" viewBox="0 0 16 16" v-html="small[t.i]"></svg>
                <span :class="{ hot: t.hot }">{{ t.t }}</span>
              </div>
            </div>
          </div>
        </div>

        <div class="mdi">
          <div v-for="w in views" :key="w.id" :class="['win', w.id]">
            <div class="wtitle">
              <svg width="16" height="16" viewBox="0 0 16 16"><path d="M.5.5H11L15.500 5V15.500H.5Z" fill="#f6eef6" stroke="#9a3d97" /><path d="M8 1H11L15 5V8H8Z" fill="#d9a3d6" /><rect x="0" y="7" width="16" height="8" fill="#fff" /><text x="1" y="14" class="trvt">RVT</text></svg>
              <b>{{ w.title }}</b>
              <span class="wb"><svg width="19" height="19" viewBox="0 0 19 19"><rect x="4" y="13" width="7" height="3" fill="#fff" /></svg></span>
              <span class="wb"><svg width="19" height="19" viewBox="0 0 19 19"><path d="M4.500 4.500H14.500V14.500H4.500Z" fill="none" stroke="#fff" /><path d="M4 5.500H15" stroke="#fff" stroke-width="3" /></svg></span>
              <span class="wb wx"><svg width="19" height="19" viewBox="0 0 19 19"><path d="M4.500 4.500L14.500 14.500M14.500 4.500L4.500 14.500" stroke="#fff" stroke-width="2.300" /></svg></span>
            </div>
            <div class="wbody">
              <div class="wtop">
                <svg v-if="w.id === 'one'" class="canvas" width="1294" height="354" viewBox="238 232 1294 354">
                  <defs>
                    <pattern id="brick1" x="238" y="308" width="8" height="8.200" patternUnits="userSpaceOnUse">
                      <rect width="8" height="8.200" fill="#432f30" /><path d="M0 .5H8M0 4.600H8" stroke="#2b1c1e" /><path d="M1.500 1V4.600M5.500 4.600V8.200" stroke="#37262a" />
                    </pattern>
                    <pattern id="brick2" x="794" y="308" width="8" height="8.200" patternUnits="userSpaceOnUse">
                      <rect width="8" height="8.200" fill="#302328" /><path d="M0 .5H8M0 4.600H8" stroke="#261b20" /><path d="M1.500 1V4.600M5.500 4.600V8.200" stroke="#2a1f24" />
                    </pattern>
                  </defs>
                  <rect x="238" y="300" width="1294" height="1" fill="#000" />
                  <rect x="238" y="306" width="556" height="130" fill="url(#brick1)" />
                  <rect x="794" y="306" width="738" height="130" fill="url(#brick2)" />
                  <rect x="238" y="439" width="556" height="51" fill="#6c696c" />
                  <rect x="794" y="439" width="738" height="51" fill="#52544f" />
                  <path d="M238 306.500H1532M238 490.500H1532M794.500 306V490" stroke="#000" />
                  <rect x="238" y="435" width="1294" height="5" fill="#000" />
                  <path d="M238 436.500H794M238 438.500H794" stroke="#77756c" /><path d="M794 436.500H1532M794 438.500H1532" stroke="#585850" />
                  <rect x="319.500" y="362.500" width="61" height="128" fill="#9a978d" stroke="#000" />
                  <rect x="322.500" y="365" width="55" height="125.500" fill="#6b6e69" stroke="#000" />
                  <path d="M322 365.500H378M377 365V490" stroke="#000" stroke-width="2" />
                  <path d="M376 366L323 426L376 490" fill="none" stroke="#000" stroke-dasharray="7 5" />
                  <path d="M338 490.500H350M364 490.500H374" stroke="#fff" />
                  <rect x="1249.500" y="362.500" width="59" height="128" fill="#76736a" stroke="#000" />
                  <rect x="1253.500" y="365" width="52" height="125.500" fill="#7c756a" stroke="#000" />
                  <path d="M1252 365.500H1306M1253 365V490" stroke="#000" stroke-width="2" />
                  <path d="M1255 366L1305 426L1254 490" fill="none" stroke="#000" stroke-dasharray="7 5" />
                </svg>
                <svg v-else class="canvas" width="1283" height="356" viewBox="253 638 1283 356">
                  <rect x="293" y="716" width="553" height="116" fill="#533738" />
                  <rect x="293" y="838" width="553" height="44" fill="#848284" />
                  <rect x="847" y="716" width="689" height="116" fill="#5b424a" />
                  <rect x="847" y="837" width="689" height="45" fill="#a3a1a3" />
                  <path d="M256 716.500H264M273 716.500H1536M256 882.500H264M273 882.500H1536" stroke="#000" />
                  <rect x="847" y="832" width="689" height="5" fill="#000" /><path d="M847 833.500H1536M847 835.500H1536" stroke="#a8a3a5" />
                  <g fill="none" stroke="#0f36a4">
                    <path d="M292 716.500H847" stroke-width="3" />
                    <path d="M294.500 716V883" stroke-width="5" stroke="#1b3f97" /><path d="M295.500 716V883" stroke="#3f5fae" />
                    <path d="M846 716V883" stroke-width="3" />
                    <path d="M294 834.500H433M483 834.500H847" stroke-width="6" stroke="#0b31a6" /><path d="M294 834.500H433M483 834.500H847" stroke="#07164c" />
                    <path d="M293 882.500H433M483 882.500H847" stroke-width="2" />
                    <path d="M430.500 767V883" stroke-width="5" stroke="#243f92" /><path d="M429.500 767V883M432.500 767V883" stroke="#3f60b4" />
                    <path d="M432 767H486" stroke-width="3" />
                  </g>
                  <rect x="434" y="768" width="47" height="114" fill="#bdb6a6" />
                  <path d="M434 769H482" stroke="#000" stroke-width="2" /><path d="M434.500 768V882M434 882.500H481" stroke="#000" />
                  <path d="M483.500 767V883" stroke="#0a1748" stroke-width="5" /><path d="M481.500 767V883M485.500 767V883" stroke="#2d55c0" />
                  <path d="M480 770L435 822L480 881" fill="none" stroke="#000" stroke-dasharray="4 3" />
                  <rect x="1271.500" y="766.500" width="55" height="116" fill="#eadfd9" stroke="#000" />
                  <rect x="1275" y="769" width="48.500" height="113.500" fill="#a9a8aa" stroke="#000" />
                  <path d="M1274 769H1324M1274.500 768V882" stroke="#000" stroke-width="2" />
                  <path d="M1276 770L1323 823L1276 881" fill="none" stroke="#000" stroke-dasharray="5 4" />
                  <path d="M1294 882.500H1304M1310 882.500H1319" stroke="#fff" />
                  <rect x="1501" y="639.500" width="33.500" height="116" rx="4" fill="#efeaf0" fill-opacity=".55" stroke="#8b8388" stroke-opacity=".7" stroke-width="1.500" />
                  <rect x="1502" y="717" width="32" height="38" rx="3" fill="#5a3f45" fill-opacity=".45" />
                  <circle cx="1528" cy="646" r="3.500" fill="#ddd" stroke="#aaa" /><path d="M1526.500 644.500L1529.500 647.500M1529.500 644.500L1526.500 647.500" stroke="#888" />
                  <path d="M1516 661.500H1524.500V670A9 9 0 1 1 1516 661.500Z" fill="#f4f3f6" stroke="#999" stroke-width="1.500" /><circle cx="1515.500" cy="670" r="4" fill="none" stroke="#999" stroke-width="1.500" />
                  <text x="1517" y="683" class="t2d">2D</text>
                  <path d="M1515 690H1520L1517.500 693ZM1515 732H1520L1517.500 735Z" fill="#666" />
                  <rect x="1510.500" y="706.500" width="10" height="11" fill="#b4d3a8" stroke="#8fae85" /><circle cx="1520" cy="716" r="3.500" fill="#cfd3cc" stroke="#777" />
                  <circle cx="1528" cy="749" r="3.500" fill="none" stroke="#3c2c31" /><path d="M1526 749H1530" stroke="#3c2c31" />
                </svg>
                <div class="vs">
                  <i class="sb"><svg width="9" height="6" viewBox="0 0 9 6"><path d="M1 5L4.500 1.500L8 5" fill="none" stroke="#4d6185" stroke-width="2" /></svg></i>
                  <i class="sb"><svg width="6" height="8" viewBox="0 0 6 8"><path d="M0 .5H6M0 2.500H6M0 4.500H6M0 6.500H6" stroke="#86a5ee" /></svg></i>
                  <i class="sb"><svg width="9" height="6" viewBox="0 0 9 6"><path d="M1 1L4.500 4.500L8 1" fill="none" stroke="#4d6185" stroke-width="2" /></svg></i>
                </div>
              </div>
              <div class="wbar">
                <span class="scale">{{ w.scale }}</span>
                <svg v-for="t in w.tools" :key="t.i" width="16" height="16" viewBox="0 0 16 16" :style="{ marginLeft: t.gap + 'px' }" v-html="small[t.i]"></svg>
                <div class="hs">
                  <i class="sb"><svg width="6" height="9" viewBox="0 0 6 9"><path d="M5 1L1.500 4.500L5 8" fill="none" stroke="#4d6185" stroke-width="2" /></svg></i>
                  <i class="sb"><svg width="8" height="6" viewBox="0 0 8 6"><path d="M.5 0V6M2.500 0V6M4.500 0V6M6.500 0V6" stroke="#86a5ee" /></svg></i>
                  <i class="sb"><svg width="6" height="9" viewBox="0 0 6 9"><path d="M1 1L4.500 4.500L1 8" fill="none" stroke="#4d6185" stroke-width="2" /></svg></i>
                </div>
                <svg class="grip" width="12" height="12" viewBox="0 0 12 12"><path d="M8 0H10V2H8ZM8 4H10V6H8ZM4 4H6V6H4ZM8 8H10V10H8ZM4 8H6V10H4ZM0 8H2V10H0Z" fill="#b8b4a2" /></svg>
              </div>
            </div>
          </div>
        </div>
      </div>

      <div class="status">
        <span class="stext">Walls : Basic Wall : Brick on 2x4 1/2" gyp. : R40</span>
        <i class="ssep"></i>
        <span class="cell c1"><svg width="16" height="16" viewBox="0 0 16 16" v-html="small.workset"></svg></span>
        <span class="scombo s1"><i><svg width="9" height="7" viewBox="0 0 9 7"><path d="M1 1L4.500 5L8 1" fill="none" stroke="#c6c3b4" stroke-width="2" /></svg></i></span>
        <span class="cell c2"><svg width="16" height="16" viewBox="0 0 16 16" v-html="small.paint"></svg><em>:0</em></span>
        <span class="cell c3"><svg width="16" height="16" viewBox="0 0 16 16" v-html="small.list"></svg></span>
        <span class="cell c4"><svg width="16" height="16" viewBox="0 0 16 16" v-html="small.main"></svg></span>
        <span class="scombo s2">Main Model<i><svg width="9" height="7" viewBox="0 0 9 7"><path d="M1 1L4.500 5L8 1" fill="none" stroke="#c6c3b4" stroke-width="2" /></svg></i></span>
        <span class="pcheck"><svg width="11" height="11" viewBox="0 0 11 11"><path d="M2 5L4.500 8L9.500 2" fill="none" stroke="#3a9a1f" stroke-width="2.200" /></svg></span>
        <span class="pd">Press &amp; Drag</span>
        <svg class="fun" width="16" height="16" viewBox="0 0 16 16" v-html="small.funnel"></svg>
        <em class="fz">:0</em>
        <i class="ssep s9"></i>
        <svg class="sgrip" width="12" height="12" viewBox="0 0 12 12"><path d="M8 0H10V2H8ZM8 4H10V6H8ZM4 4H6V6H4ZM8 8H10V10H8ZM4 8H6V10H4ZM0 8H2V10H0Z" fill="#f6f4f4" /></svg>
      </div>
    </div>

    <div class="taskbar">
      <div class="start">
        <svg width="18" height="18" viewBox="0 0 18 18"><path d="M2 3Q5 1 8 3L7 8Q4 6 1 8Z" fill="#e8542c" /><path d="M9.500 3.500Q13 5 16.500 3.500L15.500 8.500Q12 10 8.500 8.500Z" fill="#7bc142" /><path d="M1 9.500Q4 7.500 6.500 9.500L5.500 14.500Q3 12.500 0 14.500Z" fill="#4c86e8" /><path d="M8 10Q11.500 11.500 15 10L14 15Q10.500 16.500 7 15Z" fill="#f7c62f" /></svg>
        <b>start</b>
      </div>
      <div class="task on">
        <svg width="16" height="16" viewBox="0 0 16 16"><rect width="16" height="16" fill="#dcd6de" /><rect y="11" width="16" height="5" fill="#b64fa0" /><text x="4" y="10" class="tr">R</text></svg>
        <span>Autodesk Revit 2013 ...</span>
      </div>
      <div class="task exp2">
        <svg width="16" height="16" viewBox="0 0 16 16"><path d="M.5 2.500H6L7.500 4.500H13.500V13.500H.5Z" fill="#f0c64c" stroke="#b88e1e" /><path d="M2.500 6.500H15.500V14.500H2.500Z" fill="#fbe28d" stroke="#c99f2c" /></svg>
        <b>5</b><span>Windows Explorer</span><i class="dn w"></i>
      </div>
      <div class="nero">
        <div class="logo"><b>nero</b><span>@SEARCH</span></div>
      </div>
      <svg class="go" width="16" height="16" viewBox="0 0 16 16"><rect x=".5" y=".5" width="15" height="15" rx="2" fill="#2fa73a" stroke="#b8e6bb" /><path d="M2 6.500H7V3L13 8L7 13V9.500H2Z" fill="#fff" /></svg>
      <i class="dn k"></i>
      <svg class="q" width="14" height="15" viewBox="0 0 14 15"><path d="M.5.5H13.500V12.500H10L11 14.500L7 12.500H.5Z" fill="#fffde6" stroke="#333" /><path d="M4.500 4.500Q4.500 2.500 7 2.500T9.500 4.500Q9.500 6 7 7V8.500M7 9.500V11.500" fill="none" stroke="#111" stroke-width="1.800" /></svg>
      <svg class="rs" width="10" height="20" viewBox="0 0 10 20"><path d="M2.500.5H8.500V5.500H5M.5 2.500H5.500V6.500H.5Z" fill="none" stroke="#fff" /><path d="M2 15H9L5.500 18.500Z" fill="#fff" /></svg>
      <div class="tray">
        <svg width="18" height="20" viewBox="0 0 18 20"><circle cx="9" cy="10" r="8.500" fill="#2592ea" stroke="#8fd0ff" /><path d="M10.500 6L6.500 10L10.500 14" fill="none" stroke="#fff" stroke-width="2" /></svg>
        <svg width="17" height="17" viewBox="0 0 17 17"><path d="M1 6Q8 -4 15 6L13 8H4Z" fill="#1d3d9c" stroke="#000" /><path d="M3 7L5 14H9" fill="#cfd4da" stroke="#222" /><path d="M10.500 6L16 15.500H5Z" fill="#ffe62e" stroke="#7a6800" /><path d="M10.500 9V12M10.500 13V14.500" stroke="#000" stroke-width="1.500" /></svg>
      </div>
    </div>
  </div>
</template>

<style>
body {
  background: #004e98;
  overflow: hidden;
}
</style>

<style scoped>
.desktop {
  width: 1920px;
  height: 1080px;
  display: flex;
  flex-direction: column;
  background: #004e98;
  font: 11px/13px "DejaVu Sans Condensed", Tahoma, "Noto Sans", sans-serif;
  color: #000;
  letter-spacing: -0.3px;
  white-space: pre;
  overflow: hidden;
}
.desktop * {
  box-sizing: border-box;
}
svg {
  display: block;
  flex: none;
}
i, em {
  font-style: normal;
  flex: none;
}
.shortcuts {
  height: 22px;
  display: flex;
  gap: 46px;
  padding: 2px 0 0 24px;
}
.app {
  position: relative;
  width: 1654px;
  height: 1027px;
  background: #e8e4e6;
  border-left: 4px solid #8c868c;
  border-right: 4px solid #8e8a90;
  border-top: 1px solid #5b5b60;
  display: flex;
  flex-direction: column;
}
.dn {
  width: 5px;
  height: 3px;
  background: #222;
  clip-path: polygon(0 0, 100% 0, 50% 100%);
}
.custom {
  width: 8px;
  height: 7px;
  background: #111;
  clip-path: polygon(0 0, 100% 0, 100% 20%, 0 20%, 0 40%, 100% 40%, 50% 100%, 0 40%);
}
.rbtn {
  position: absolute;
  left: 0;
  top: 4px;
  width: 41px;
  height: 41px;
  border: 1px solid #3b3b3f;
  background: linear-gradient(#d6d4d6, #a6a3a6 50%, #77747a 55%, #b3b0b3);
  display: flex;
  align-items: center;
  gap: 1px;
  padding: 0 0 2px 2px;
  z-index: 2;
}
.rbtn .dn {
  width: 8px;
  height: 4px;
}
.titlebar {
  height: 28px;
  display: flex;
  align-items: center;
  padding-left: 41px;
  background: linear-gradient(#fbfafb, #e6e3e6 50%, #bfbcc0);
  border-bottom: 1px solid #7d7b80;
}
.titlebar > * {
  flex: none;
}
.quick {
  width: 600px;
  display: flex;
  align-items: center;
  padding-top: 2px;
}
.quick .dn {
  background: #555;
}
.qa {
  width: 16px;
  font-size: 17px;
  line-height: 17px;
  text-align: center;
  color: #3c3f4a;
}
.qsep {
  width: 1px;
  height: 22px;
  background: #aaa8ad;
}
.apptitle {
  width: 460px;
  padding-top: 1px;
  font: 12.5px/15px "Liberation Sans", Arial, sans-serif;
  letter-spacing: 0.2px;
  color: #2d2d33;
}
.rt {
  width: 4px;
  height: 8px;
  margin: 3px 7px 0 1px;
  background: #111;
  clip-path: polygon(0 0, 100% 50%, 0 100%);
}
.searchbox {
  width: 179px;
  height: 21px;
  margin: 2px 5px 0 -2px;
  padding: 4px 3px 0;
  background: #f5f5f5;
  border: 1px solid #fff;
  font-style: italic;
  color: #777;
  letter-spacing: -0.36px;
}
.sicon {
  margin-right: 8px;
}
.signin {
  width: 86px;
  margin-left: -3px;
}
.exch {
  margin: 0 9px 0 8px;
}
.helpi {
  margin: 0 8px 0 9px;
}
.winctl {
  margin-left: 23px;
}
.tabs {
  height: 20px;
  display: flex;
  align-items: center;
  background: linear-gradient(#a09ea1, #a6a4a7);
  color: #1c1c20;
}
.tab {
  flex: none;
  height: 17px;
  margin-top: 3px;
  display: flex;
  justify-content: center;
  padding-top: 1px;
}
.tab.on {
  background: linear-gradient(#f8f7f8, #efedef);
  border-radius: 3px 3px 0 0;
}
.pill {
  width: 15px;
  height: 9px;
  margin: 0 4px 0 31px;
  background: #f2f2f4;
  border: 1px solid #333;
  border-radius: 3px;
  display: flex;
  justify-content: center;
  align-items: center;
}
.pill i {
  width: 6px;
  height: 3px;
  background: #333;
  clip-path: polygon(50% 0, 100% 100%, 0 100%);
}
.ribbon {
  height: 97px;
  display: flex;
  background: #fdfdfd;
  border-bottom: 1px solid #9b989b;
  color: #2c2c31;
}
.panel {
  flex: none;
  height: 94px;
  border-right: 1px solid #b4b2b5;
  display: flex;
  flex-direction: column;
}
.p-select { width: 45px; }
.p-graphics { width: 505px; }
.p-create { width: 511px; }
.p-sheets { width: 320px; }
.p-windows { width: 253px; border-right: 0; }
.ribbon::after {
  content: "";
  flex: 1;
  background: linear-gradient(90deg, #b8b6b9, #8f8d90);
}
.pbody {
  height: 76px;
  display: flex;
  background: linear-gradient(#fff, #fcfcfc);
}
.ptitle {
  position: relative;
  height: 18px;
  border-top: 1px solid #d5d3d6;
  background: #f3f2f3;
  padding-top: 1px;
  text-align: center;
  margin-left: 1px;
}
.p-graphics .ptitle { padding-right: 12px; }
.launch {
  position: absolute;
  right: 5px;
  top: 6px;
}
.modify {
  width: 38px;
  height: 72px;
  margin: 3px 0 0 4px;
  border: 1px solid #3f7dc1;
  background: linear-gradient(#a5cef6, #b8dafa 60%, #a6cdf5);
  display: flex;
  flex-direction: column;
  align-items: center;
  gap: 6px;
}
.btn {
  position: relative;
  flex: none;
  display: flex;
  flex-direction: column;
  align-items: center;
  padding-top: 5px;
}
.btn svg {
  margin-left: -1px;
  margin-bottom: 5px;
}
.btn.low svg {
  margin-bottom: 7px;
}
.off {
  color: #c2c1c4;
}
.side {
  position: absolute;
  top: 55px;
}
.below {
  margin-top: 2px;
}
.off .dn {
  background: #888;
}
.pline {
  width: 1px;
  background: #d2d0d3;
}
.smalls {
  display: flex;
  flex-direction: column;
  gap: 8px;
  padding-top: 8px;
}
.p-sheets .smalls { margin-left: 9px; }
.p-windows .smalls { width: 76px; margin: 1px 0 0 8px; }
.sm {
  display: flex;
  align-items: center;
  gap: 5px;
  height: 16px;
}
.sm .dn {
  margin-left: 3px;
}
.options {
  height: 31px;
  background: #e8e4e6;
  border-top: 1px solid #fff;
}
.main {
  height: 823px;
  display: flex;
}
.docks {
  width: 225px;
  background: #e9e6dc;
  display: flex;
  flex-direction: column;
  gap: 6px;
  padding-top: 1px;
}
.dock {
  width: 220px;
  background: #7088dd;
  border: 1px solid #5d72cf;
  border-width: 0 1px 1px;
  padding: 0 4px 2px 3px;
  display: flex;
  flex-direction: column;
}
.props { height: 406px; }
.browser { height: 410px; border-top: 1px solid #333a66; }
.docktitle {
  height: 20px;
  flex: none;
  margin: 0 -4px 0 -3px;
  padding: 0 4px 0 1px;
  display: flex;
  align-items: center;
  justify-content: space-between;
  background: linear-gradient(#90a8f0, #7590e4 40%, #7b9aea);
  color: #d8e4fb;
}
.browser .docktitle { height: 22px; padding-top: 2px; }
.docktitle b {
  letter-spacing: -0.1px;
}
.props .docktitle b {
  letter-spacing: 0;
}
.x {
  width: 13px;
  height: 12px;
  background: #b5596a;
  border: 1px solid #e2d3e6;
  border-radius: 2px;
  display: flex;
  align-items: center;
  justify-content: center;
}
.inner {
  position: relative;
  flex: 1;
  background: #ece9d8;
  border: 1px solid #5a6078;
  border-width: 1px 0 0 1px;
  display: flex;
  flex-direction: column;
  overflow: hidden;
}
.browser .inner { background: #fff; }
.typesel {
  height: 72px;
  margin-right: 1px;
  border-bottom: 1px solid #cfcdd4;
  background: linear-gradient(#fff, #fbfafc 45%, #ecebf0);
  display: flex;
  align-items: center;
}
.thumb {
  width: 66px;
  height: 66px;
  margin-left: 3px;
  border: 1px solid #cbcad3;
  display: flex;
  align-items: center;
  justify-content: center;
}
.tname {
  width: 127px;
  padding-top: 1px;
  margin-left: 4px;
  color: #2c2c31;
}
.typesel .dn {
  width: 7px;
  height: 4px;
}
.inst {
  height: 24px;
  display: flex;
  align-items: center;
}
.combo {
  width: 129px;
  height: 20px;
  margin-right: 7px;
  background: #fff;
  border: 1px solid #7f9db9;
  display: flex;
  align-items: center;
  justify-content: space-between;
  padding-left: 2px;
}
.cbtn {
  width: 15px;
  height: 16px;
  margin-right: 1px;
  background: linear-gradient(#d5e1fd, #b7cbf9);
  border-radius: 2px;
  display: flex;
  align-items: center;
  justify-content: center;
}
.et {
  margin: -3px 0 0 4px;
}
.gridwrap {
  height: 260px;
  display: flex;
  overflow: hidden;
}
.grid {
  width: 193px;
  background: #fff;
}
.row {
  height: 15px;
  display: flex;
  border-bottom: 1px dotted #b9b9bd;
}
.row.off {
  color: #aca899;
}
.row.head {
  background: #dcdcde;
  border-bottom: 0;
  justify-content: space-between;
  padding: 0 6px 2px 1px;
  align-items: center;
}
.name {
  width: 96px;
  padding-left: 7px;
  flex: none;
  border-right: 1px dotted #b9b9bd;
}
.val {
  flex: 1;
  padding-left: 2px;
}
.val.edit {
  border: 1px solid #000;
  margin: 0 1px 0 1px;
  padding-left: 4px;
  line-height: 12px;
}
.ebtn {
  display: block;
  height: 12px;
  margin: 1px 1px 0 0;
  border: 1px solid #1c3f73;
  border-right-width: 2px;
  border-bottom-width: 2px;
  border-radius: 2px;
  text-align: center;
  line-height: 11px;
  overflow: hidden;
}
.chk {
  display: block;
  width: 13px;
  height: 13px;
  margin-left: 2px;
  border: 1px solid #1c5180;
  background: #f4f4f0;
}
.vs {
  width: 16px;
  background: linear-gradient(90deg, #f3f1ec, #fefefb 40%);
  display: flex;
  flex-direction: column;
  justify-content: space-between;
  align-items: center;
}
.sb {
  width: 16px;
  height: 16px;
  background: linear-gradient(135deg, #d6e2fe, #b5c9f8);
  border: 1px solid #fff;
  border-radius: 3px;
  box-shadow: inset -1px -1px 0 #a3bbf0;
  display: flex;
  align-items: center;
  justify-content: center;
}
.gridwrap .vs { justify-content: flex-start; }
.sb.long {
  height: 114px;
}
.sb.end {
  margin-top: auto;
}
.pfoot {
  flex: 1;
  display: flex;
  justify-content: space-between;
  padding: 3px 3px 0 1px;
}
.pfoot u {
  color: #16166e;
  padding-top: 2px;
}
.apply {
  width: 73px;
  height: 20px;
  padding-top: 3px;
  text-align: center;
  border: 1px solid #d3cfbd;
  border-radius: 3px;
  background: #f4f2ea;
  color: #a5a292;
}
.tlines {
  position: absolute;
  left: 0;
  top: 0;
}
.node {
  position: relative;
  height: 16px;
  display: flex;
  align-items: center;
}
.exp {
  width: 9px;
  height: 9px;
  margin: 0 8px 0 4px;
}
.exp.show {
  background: linear-gradient(135deg, #fff, #d4d0c4);
  border: 1px solid #7b91ae;
  border-radius: 1px;
  display: flex;
  align-items: center;
  justify-content: center;
}
.node svg + span {
  margin-left: 4px;
}
.lv1 .exp { margin-left: 24px; }
.lv2 .exp { margin-left: 44px; }
.lv1 .exp + span { margin-left: 4px; }
.hot {
  background: #f3ebe4;
  padding: 1px 3px 2px;
  margin-left: 1px;
}
.lv2 > span:not(.hot) { margin-left: 4px; }
.bold {
  font-weight: bold;
}
.mdi {
  flex: 1;
  position: relative;
  background: #848284;
  border-top: 1px solid #6d6b66;
  border-left: 1px solid #5c5a5c;
}
.win {
  position: absolute;
  display: flex;
  flex-direction: column;
  border-radius: 7px 7px 0 0;
}
.one {
  left: 1px;
  top: 0;
  width: 1324px;
  height: 407px;
  background: #7a90e0;
  box-shadow: inset 1px 0 0 #5d72cf, inset -1px -1px 0 #5560c8;
  padding: 0 4px 4px 7px;
}
.two {
  left: 18px;
  top: 407px;
  width: 1311px;
  height: 410px;
  background: #0a3fd8;
  box-shadow: inset 1px 0 0 #0831d9, inset -1px -2px 0 #00138c;
  padding: 0 4px 5px 5px;
}
.wtitle {
  flex: none;
  height: 32px;
  padding-top: 2px;
  display: flex;
  align-items: center;
  gap: 2px;
  border-radius: 7px 7px 0 0;
  border-bottom: 1px solid #777;
}
.one .wtitle {
  margin: 0 -4px 0 -7px;
  padding-left: 8px;
  padding-right: 7px;
  background: linear-gradient(#7b96e8, #a6bbf8 8%, #7b93e2 30%, #7d9aea 65%, #86a6f0 85%, #6e86d8);
  color: #dbe6fb;
}
.two .wtitle {
  height: 31px;
  margin: 0 -4px 0 -5px;
  padding-left: 5px;
  padding-right: 6px;
  background: linear-gradient(#0a3fd0, #3c8cff 8%, #0054e3 30%, #0062fa 80%, #0048d0);
  color: #fff;
}
.wtitle b {
  flex: 1;
  margin: 2px 0 0 1px;
  font: bold 12.5px/16px "DejaVu Sans Condensed", "Trebuchet MS", sans-serif;
  letter-spacing: -0.02px;
}
.two b {
  text-shadow: 1px 1px 0 #0a2a80;
}
.trvt {
  font: bold 7px "Liberation Sans", sans-serif;
  letter-spacing: 0;
  fill: #111;
}
.wb {
  width: 21px;
  height: 21px;
  border: 1px solid #fff;
  border-radius: 3px;
  background: linear-gradient(135deg, #5c8cf5, #2a5be0 60%, #2353d4);
}
.one .wb {
  border-color: #b9c8f4;
  background: linear-gradient(135deg, #6288ee, #3a62de);
}
.wb.wx {
  background: linear-gradient(135deg, #f09070, #d9431e);
}
.one .wb.wx {
  background: linear-gradient(135deg, #c2808f, #ab5567);
}
.wbody {
  flex: 1;
  background: #fff;
  display: flex;
  flex-direction: column;
}
.wtop {
  display: flex;
}
.wbar {
  flex: 1;
  display: flex;
  align-items: center;
  background: #ece9d8;
  border-bottom: 1px solid #fff;
}
.scale {
  width: 62px;
  margin-left: 7px;
  letter-spacing: -0.2px;
}
.two .scale {
  width: 55px;
  margin-left: 11px;
}
.hs {
  flex: 1;
  height: 100%;
  margin-left: 3px;
  background: linear-gradient(#f3f1ec, #fefefb 40%);
  display: flex;
  justify-content: space-between;
  align-items: center;
}
.grip {
  margin: 4px 3px 0 4px;
}
.t2d {
  font: bold 9px "DejaVu Sans Condensed", sans-serif;
  fill: #7f9cc4;
}
.status {
  height: 26px;
  display: flex;
  align-items: center;
  border-top: 1px solid #a09488;
  background: linear-gradient(#f1eff1, #dcd9dc 40%, #b6b3b7);
}
.status > * {
  flex: none;
}
.stext {
  width: 702px;
  padding-left: 2px;
}
.ssep {
  width: 1px;
  height: 20px;
  margin-right: 3px;
  background: #fff;
}
.cell {
  height: 22px;
  background: #d5d3d8;
  display: flex;
  align-items: center;
  justify-content: center;
}
.c1 { width: 25px; margin-right: 3px; }
.c2 { width: 50px; gap: 5px; margin: 0 6px 0 3px; padding-top: 2px; }
.c3 { width: 20px; margin-right: 6px; }
.c4 { width: 20px; margin-right: 4px; }
.scombo {
  height: 22px;
  background: #fff;
  border: 1px solid #d6d3c8;
  display: flex;
  justify-content: space-between;
  padding: 2px 0 0 3px;
  color: #77757a;
}
.scombo i {
  width: 16px;
  height: 20px;
  margin: -2px 0 0 auto;
  background: #f4f2ea;
  display: flex;
  align-items: center;
  justify-content: center;
}
.s1 { width: 206px; }
.s2 { width: 157px; }
.pcheck {
  width: 13px;
  height: 13px;
  margin-left: 226px;
  border: 1px solid #1c5180;
  background: #fff;
}
.pd {
  width: 86px;
  margin-left: 3px;
}
.fz {
  width: 75px;
  margin-left: 1px;
  padding-top: 3px;
}
.ssep.s9 { margin-right: 7px; }
.sgrip { margin-top: 8px; }
.taskbar {
  height: 31px;
  display: flex;
  align-items: center;
  background: linear-gradient(#2a5bd6, #4d8ff2 8%, #2a63e0 18%, #245edc 80%, #1a47b4);
  color: #fff;
}
.start {
  width: 96px;
  height: 31px;
  padding-left: 10px;
  display: flex;
  align-items: center;
  gap: 7px;
  border-radius: 0 10px 12px 0;
  background: linear-gradient(#3c8a3c, #5cb55a 10%, #3a9a3a 30%, #389a38 80%, #2a7a2a);
  box-shadow: inset -2px 0 2px #246a24;
}
.start b {
  font: italic bold 17px/22px "Open Sans", "Noto Sans", sans-serif;
  letter-spacing: -0.4px;
  text-shadow: 1px 1px 1px #1d4a1d;
}
.task {
  height: 25px;
  margin-top: 3px;
  padding-left: 11px;
  display: flex;
  align-items: center;
  gap: 4px;
  border-radius: 2px;
}
.task.on {
  width: 160px;
  margin-left: 10px;
  background: #1b4cb8;
  box-shadow: inset 1px 1px 1px #0f348c;
}
.tr {
  font: bold 11px "Liberation Sans", sans-serif;
  fill: #111;
}
.exp2 {
  width: 158px;
  margin-left: 1px;
  padding-left: 9px;
  background: linear-gradient(#5a9bff, #3c81f3 20%, #3a7df0);
}
.exp2 b {
  color: #f8e3b0;
}
.dn.w {
  margin-left: auto;
  margin-right: 3px;
  background: #fff;
}
.nero {
  width: 1004px;
  height: 22px;
  margin-left: 360px;
  background: #fff;
  display: flex;
  justify-content: center;
}
.logo {
  display: flex;
  flex-direction: column;
  align-items: center;
  color: #77777b;
  font-size: 8px;
  line-height: 8px;
  letter-spacing: 0.7px;
}
.logo b {
  font: bold 12px/11px Roboto, sans-serif;
  letter-spacing: 0;
}
.go {
  margin-left: 6px;
}
.dn.k {
  margin: 0 14px 0 5px;
  background: #0b1c50;
}
.rs {
  margin: -2px 9px 0 10px;
}
.tray {
  flex: 1;
  height: 31px;
  margin-left: 8px;
  background: linear-gradient(#1290e8, #19b0f5 10%, #1296ec 30%, #109aee 80%, #0c78c8);
  display: flex;
  align-items: center;
  gap: 1px;
}
.tray svg:first-child {
  margin-left: -9px;
}
</style>
